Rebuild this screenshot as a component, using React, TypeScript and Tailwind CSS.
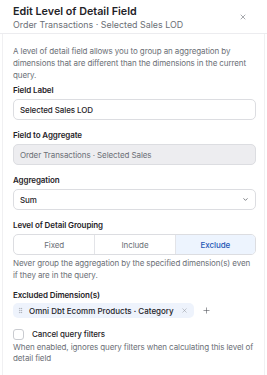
import { X, ChevronDown, Plus, GripVertical } from 'lucide-react'

const GROUPINGS = ['Fixed', 'Include', 'Exclude']

export default function App() {
  const active = 'Exclude'

  return (
    <div className="h-[375px] w-[267px] overflow-hidden bg-white font-['Inter',sans-serif] text-[#1f2328]">
      {/* Header */}
      <div className="flex items-start justify-between border-b border-[#ececef] pt-[5px] pr-[13px] pb-[2px] pl-[13px]">
        <div>
          <h1 className="text-[10.75px] leading-[14px] font-semibold">Edit Level of Detail Field</h1>
          <p className="text-[8.9px] leading-[12px] text-[#6b6f76]">Order Transactions · Selected Sales LOD</p>
        </div>
        <button className="mt-[8px] mr-[7px] text-[#6b6f76]">
          <X size={8} strokeWidth={1.8} />
        </button>
      </div>

      {/* Body */}
      <div className="mx-[2px] h-full border-x border-[#f0f0f2] pt-[11px] pr-[8px] pl-[10px] tracking-[-0.1px]">
        <p className="text-[8px] leading-[12px] text-[#6b6f76]">
          A level of detail field allows you to group an aggregation by dimensions that are different than the
          dimensions in the current query.
        </p>

        {/* Field Label */}
        <label className="mt-[3px] block text-[8px] leading-[12px] font-semibold">Field Label</label>
        <div className="mt-[3px] flex h-[21px] items-center rounded-[5px] border border-[#dcdde1] px-[6px] text-[8px] font-medium">
          Selected Sales LOD
        </div>

        {/* Field to Aggregate */}
        <label className="mt-[9px] block text-[8px] leading-[12px] font-semibold">Field to Aggregate</label>
        <div className="mt-[3px] flex h-[21px] items-center rounded-[5px] border border-[#dcdde1] bg-[#ededf0] px-[6px] text-[8px] text-[#6b6f76]">
          Order Transactions · Selected Sales
        </div>

        {/* Aggregation */}
        <label className="mt-[9px] block text-[8px] leading-[12px] font-semibold">Aggregation</label>
        <div className="mt-[3px] flex h-[21px] items-center justify-between rounded-[5px] border border-[#dcdde1] px-[6px] text-[8px] font-medium">
          <span>Sum</span>
          <ChevronDown size={7} strokeWidth={2.2} className="text-[#3b3f46]" />
        </div>

        {/* Grouping */}
        <label className="mt-[9px] block text-[8px] leading-[12px] font-semibold">Level of Detail Grouping</label>
        <div className="mt-[3px] grid h-[21px] grid-cols-3 overflow-hidden rounded-[5px] border border-[#dcdde1] text-[8px]">
          {GROUPINGS.map((g, i) => (
            <div
              key={g}
              className={
                'flex items-center justify-center ' +
                (i > 0 ? 'border-l border-[#e3e4e8] ' : '') +
                (g === active ? 'bg-[#edf4fe] font-medium text-[#2456b5]' : 'text-[#6b6f76]')
              }
            >
              {g}
            </div>
          ))}
        </div>
        <p className="mt-[2px] text-[8px] leading-[12px] text-[#6b6f76]">
          Never group the aggregation by the specified dimension(s) even if they are in the query.
        </p>

        {/* Excluded dimensions */}
        <label className="mt-[8px] block text-[8px] leading-[12px] font-semibold">Excluded Dimension(s)</label>
        <div className="mt-[2px] flex items-center gap-[8px]">
          <div className="flex h-[15px] items-center gap-[5px] rounded-[5px] bg-[#eef3fc] pr-[6px] pl-[4px] text-[8px] font-medium tracking-normal">
            <GripVertical size={7} strokeWidth={1.6} className="text-[#9a9ea6]" />
            <span>Omni Dbt Ecomm Products · Category</span>
            <X size={7} strokeWidth={1.6} className="ml-[2px] text-[#8a8e96]" />
          </div>
          <Plus size={9} strokeWidth={1.5} className="text-[#4b4f56]" />
        </div>

        {/* Cancel filters */}
        <div className="mt-[10px] flex h-[12px] items-center gap-[8px]">
          <div className="h-[11px] w-[11px] rounded-[3px] border border-[#c9cbd0] bg-white" />
          <span className="text-[8px] font-medium">Cancel query filters</span>
        </div>
        <p className="mt-[2px] text-[8px] leading-[11px] whitespace-nowrap text-[#6b6f76]">
          When enabled, ignores query filters when calculating this level of
          <br />
          detail field
        </p>
      </div>
    </div>
  )
}
